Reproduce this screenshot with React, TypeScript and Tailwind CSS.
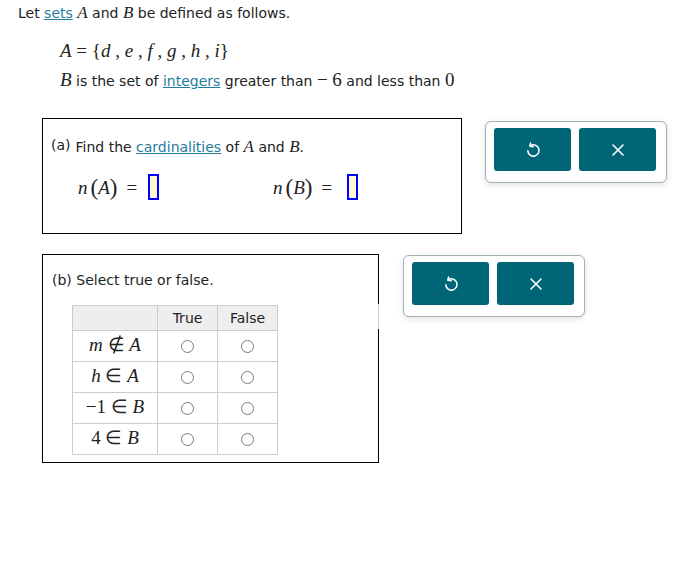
import React from "react";

const serif = { fontFamily: '"Liberation Serif", "Times New Roman", serif' };

function M({ children, small = false }: { children: React.ReactNode; small?: boolean }) {
  return (
    <span className={(small ? "text-[17px]" : "text-[19px]") + " italic leading-none"} style={serif}>
      {children}
    </span>
  );
}

function S({ children, cls = "" }: { children: React.ReactNode; cls?: string }) {
  return (
    <span className={"text-[19px] leading-none " + cls} style={serif}>
      {children}
    </span>
  );
}

function UndoIcon() {
  return (
    <svg width="18" height="18" viewBox="0 0 16 16" fill="none" stroke="white" strokeWidth="1.4" strokeLinecap="round" strokeLinejoin="round">
      <path d="M5.4 4.4 A5 5 0 1 1 3.4 8.8" />
      <path d="M5.8 1.8 L5.3 4.6 L8.1 5" />
    </svg>
  );
}

function XIcon() {
  return (
    <svg width="14" height="14" viewBox="0 0 14 14" fill="none" stroke="white" strokeWidth="1.6" strokeLinecap="round">
      <path d="M2 2 L12 12 M12 2 L2 12" />
    </svg>
  );
}

function ButtonGroup() {
  return (
    <div className="flex gap-2 rounded-[6px] border border-[#9fb0b8] bg-white pb-[11px] pl-[8px] pr-[10px] pt-[6px] shadow-[0_2px_6px_rgba(0,0,0,0.12)]">
      <button className="flex h-[43px] w-[77px] items-center justify-center rounded-[3px] bg-[#006577]">
        <UndoIcon />
      </button>
      <button className="flex h-[43px] w-[77px] items-center justify-center rounded-[3px] bg-[#006577]">
        <XIcon />
      </button>
    </div>
  );
}

function Input() {
  return <span className="inline-block h-[26px] w-[11px] border-2 border-[#0000ff] bg-[#fff8d4] align-middle" />;
}

function Radio() {
  return <span className="inline-block h-[13px] w-[13px] rounded-full border border-[#7a7a7a] bg-white" />;
}

const rows: React.ReactNode[] = [
  <span key="1">
    <M>m</M>
    <S>&nbsp;∉&nbsp;</S>
    <M>A</M>
  </span>,
  <span key="2">
    <M>h</M>
    <S>&nbsp;∈&nbsp;</S>
    <M>A</M>
  </span>,
  <span key="3">
    <S>−1&nbsp;∈&nbsp;</S>
    <M>B</M>
  </span>,
  <span key="4">
    <S>4&nbsp;∈&nbsp;</S>
    <M>B</M>
  </span>,
];

export default function App() {
  return (
    <div
      className="relative h-[565px] w-[690px] bg-white text-[14px] text-[#222]"
      style={{ fontFamily: '"DejaVu Sans", Verdana, sans-serif' }}
    >
      <div className="pl-[18px] pt-[4px] leading-[18px]">
        Let <span className="text-[#1f7d9e] underline">sets</span> <M small>A</M> and <M small>B</M> be defined as follows.
      </div>
      <div className="pl-[60px] pt-[19px] leading-[22px]">
        <div>
          <M>A</M>
          <S> = {"{"}</S>
          <M>d</M>
          <S>&nbsp;,&nbsp;</S>
          <M>e</M>
          <S>&nbsp;,&nbsp;</S>
          <M>f</M>
          <S>&nbsp;,&nbsp;</S>
          <M>g</M>
          <S>&nbsp;,&nbsp;</S>
          <M>h</M>
          <S>&nbsp;,&nbsp;</S>
          <M>i</M>
          <S>{"}"}</S>
        </div>
        <div className="mt-[7px]">
          <M>B</M> is the set of <span className="text-[#1f7d9e] underline">integers</span> greater than{" "}
          <S>−&nbsp;6</S> and less than <S>0</S>
        </div>
      </div>

      <div className="mt-[26px] flex items-start gap-[23px] pl-[42px]">
        <div className="h-[116px] w-[420px] border border-black px-[8px] pt-[18px]">
          <div className="flex items-baseline">
            <span className="relative -top-[2px]">(a)</span>
            <span className="ml-[5px]">
              Find the <span className="text-[#1f7d9e] underline">cardinalities</span> of <M small>A</M> and <M small>B</M>.
            </span>
          </div>
          <div className="mt-[16px] flex items-center">
            <div className="ml-[27px] flex w-[195px] items-center">
              <M>n</M>
              <S cls="ml-[3px] text-[23px]">(</S>
              <M>A</M>
              <S cls="text-[23px]">)</S>
              <S cls="mx-[9px]">=</S>
              <span className="ml-[2px]">
                <Input />
              </span>
            </div>
            <div className="flex items-center">
              <M>n</M>
              <S cls="ml-[3px] text-[23px]">(</S>
              <M>B</M>
              <S cls="text-[23px]">)</S>
              <S cls="mx-[9px]">=</S>
              <span className="ml-[6px]">
                <Input />
              </span>
            </div>
          </div>
        </div>
        <div className="mt-[3px]">
          <ButtonGroup />
        </div>
      </div>

      <div className="mt-[20px] flex items-start gap-[24px] pl-[42px]">
        <div className="relative h-[209px] w-[337px] border border-black pl-[9px] pt-[15px]">
          <div>(b) Select true or false.</div>
          <div className="absolute right-[-1px] top-[49px] h-[25px] w-[1px] bg-[#c9d3d8]" />
          <table className="ml-[20px] mt-[14px] border-collapse text-center">
            <thead>
              <tr className="h-[25px] bg-[#eeeeee]">
                <th className="w-[85px] border border-[#cccccc] font-normal"></th>
                <th className="w-[60px] border border-[#cccccc] font-normal">True</th>
                <th className="w-[60px] border border-[#cccccc] font-normal">False</th>
              </tr>
            </thead>
            <tbody>
              {rows.map((r, i) => (
                <tr key={i} className="h-[31px]">
                  <td className="border border-[#cccccc] p-0">{r}</td>
                  <td className="border border-[#cccccc] p-0 align-middle">
                    <div className="flex items-center justify-center">
                      <Radio />
                    </div>
                  </td>
                  <td className="border border-[#cccccc] p-0 align-middle">
                    <div className="flex items-center justify-center">
                      <Radio />
                    </div>
                  </td>
                </tr>
              ))}
            </tbody>
          </table>
        </div>
        <div className="mt-[1px]">
          <ButtonGroup />
        </div>
      </div>
    </div>
  );
}
